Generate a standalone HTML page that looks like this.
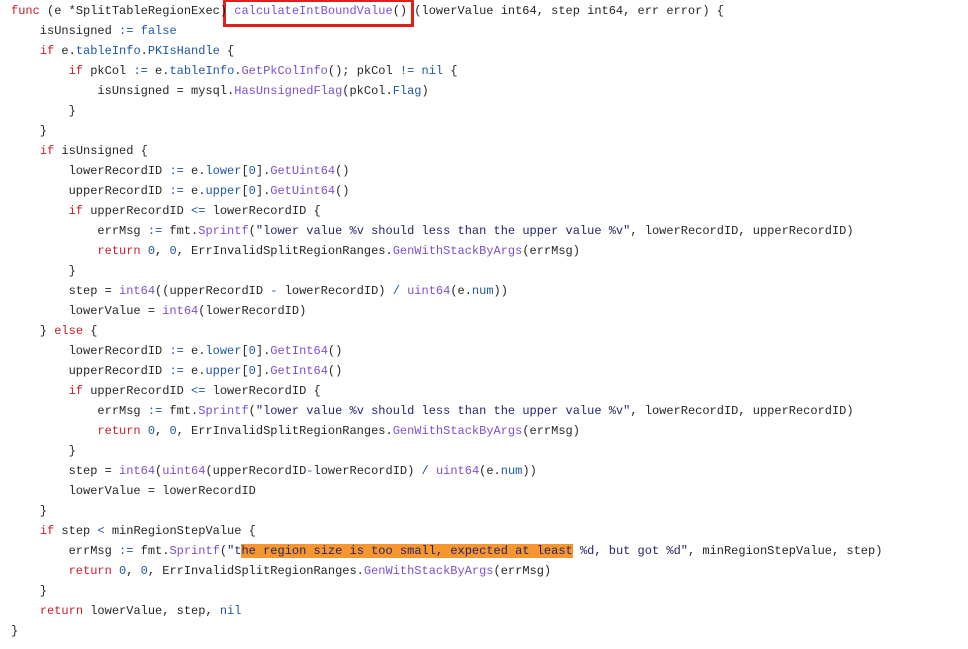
<!DOCTYPE html><html><head><style>
body{margin:0;background:#fff;width:968px;height:649px;overflow:hidden;position:relative}
pre{margin:0;position:absolute;left:11px;top:1px;font:12px/20px "Liberation Mono",monospace;color:#262626}
.k{color:#c9202f}.f{color:#7d4fcf}.b{color:#1f57a4}.s{color:#23266b}
.h{background:#f7962f;color:#23266b}
.box{position:absolute;left:223px;top:-1px;width:185px;height:22px;border:3px solid #e0201b}
</style></head><body>
<div class="box"></div>
<pre><span class="k">func</span> (e *SplitTableRegionExec) <span class="f">calculateIntBoundValue</span>() (lowerValue int64, step int64, err error) {
    isUnsigned <span class="b">:=</span> <span class="b">false</span>
    <span class="k">if</span> e.<span class="b">tableInfo</span>.<span class="b">PKIsHandle</span> {
        <span class="k">if</span> pkCol <span class="b">:=</span> e.<span class="b">tableInfo</span>.<span class="f">GetPkColInfo</span>(); pkCol <span class="b">!=</span> <span class="b">nil</span> {
            isUnsigned = mysql.<span class="f">HasUnsignedFlag</span>(pkCol.<span class="b">Flag</span>)
        }
    }
    <span class="k">if</span> isUnsigned {
        lowerRecordID <span class="b">:=</span> e.<span class="b">lower</span>[<span class="b">0</span>].<span class="f">GetUint64</span>()
        upperRecordID <span class="b">:=</span> e.<span class="b">upper</span>[<span class="b">0</span>].<span class="f">GetUint64</span>()
        <span class="k">if</span> upperRecordID <span class="b">&lt;=</span> lowerRecordID {
            errMsg <span class="b">:=</span> fmt.<span class="f">Sprintf</span>(<span class="s">"lower value %v should less than the upper value %v"</span>, lowerRecordID, upperRecordID)
            <span class="k">return</span> <span class="b">0</span>, <span class="b">0</span>, ErrInvalidSplitRegionRanges.<span class="f">GenWithStackByArgs</span>(errMsg)
        }
        step = <span class="f">int64</span>((upperRecordID <span class="b">-</span> lowerRecordID) <span class="b">/</span> <span class="f">uint64</span>(e.<span class="b">num</span>))
        lowerValue = <span class="f">int64</span>(lowerRecordID)
    } <span class="k">else</span> {
        lowerRecordID <span class="b">:=</span> e.<span class="b">lower</span>[<span class="b">0</span>].<span class="f">GetInt64</span>()
        upperRecordID <span class="b">:=</span> e.<span class="b">upper</span>[<span class="b">0</span>].<span class="f">GetInt64</span>()
        <span class="k">if</span> upperRecordID <span class="b">&lt;=</span> lowerRecordID {
            errMsg <span class="b">:=</span> fmt.<span class="f">Sprintf</span>(<span class="s">"lower value %v should less than the upper value %v"</span>, lowerRecordID, upperRecordID)
            <span class="k">return</span> <span class="b">0</span>, <span class="b">0</span>, ErrInvalidSplitRegionRanges.<span class="f">GenWithStackByArgs</span>(errMsg)
        }
        step = <span class="f">int64</span>(<span class="f">uint64</span>(upperRecordID<span class="b">-</span>lowerRecordID) <span class="b">/</span> <span class="f">uint64</span>(e.<span class="b">num</span>))
        lowerValue = lowerRecordID
    }
    <span class="k">if</span> step <span class="b">&lt;</span> minRegionStepValue {
        errMsg <span class="b">:=</span> fmt.<span class="f">Sprintf</span>(<span class="s">"t</span><span class="h">he region size is too small, expected at least</span><span class="s"> %d, but got %d"</span>, minRegionStepValue, step)
        <span class="k">return</span> <span class="b">0</span>, <span class="b">0</span>, ErrInvalidSplitRegionRanges.<span class="f">GenWithStackByArgs</span>(errMsg)
    }
    <span class="k">return</span> lowerValue, step, <span class="b">nil</span>
}</pre>
</body></html>
